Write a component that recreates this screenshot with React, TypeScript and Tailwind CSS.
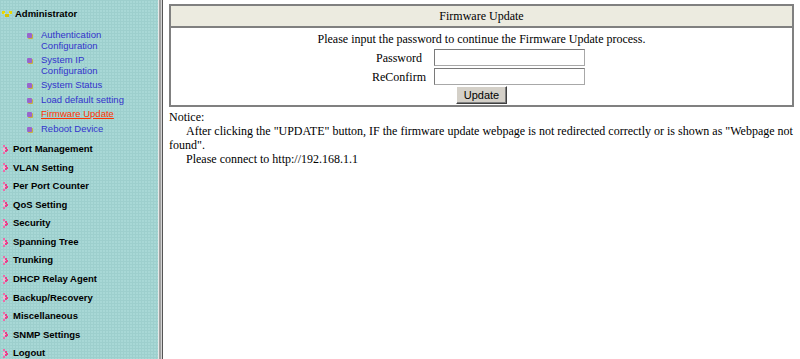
import React from 'react';

const subItems = [
  { label: 'Authentication Configuration', lines: ['Authentication', 'Configuration'] },
  { label: 'System IP Configuration', lines: ['System IP', 'Configuration'] },
  { label: 'System Status', lines: ['System Status'] },
  { label: 'Load default setting', lines: ['Load default setting'] },
  { label: 'Firmware Update', lines: ['Firmware Update'], active: true },
  { label: 'Reboot Device', lines: ['Reboot Device'] },
];

const menuItems = [
  'Port Management',
  'VLAN Setting',
  'Per Port Counter',
  'QoS Setting',
  'Security',
  'Spanning Tree',
  'Trunking',
  'DHCP Relay Agent',
  'Backup/Recovery',
  'Miscellaneous',
  'SNMP Settings',
  'Logout',
];

const PinkArrow = () => (
  <svg width="7" height="9" viewBox="0 0 7 9" className="shrink-0">
    <rect x="1" y="0" width="2" height="2" fill="#f06aa8" />
    <rect x="3" y="2" width="2" height="2" fill="#e8408a" />
    <rect x="4" y="4" width="2" height="2" fill="#e8408a" />
    <rect x="3" y="5" width="2" height="2" fill="#e8408a" />
    <rect x="1" y="7" width="2" height="2" fill="#f06aa8" />
    <rect x="1" y="3" width="2" height="3" fill="#f9b3d3" />
  </svg>
);

const YellowDown = () => (
  <svg width="10" height="7" viewBox="0 0 10 7" className="shrink-0">
    <rect x="0" y="0" width="3" height="3" fill="#e8d800" />
    <rect x="7" y="0" width="3" height="3" fill="#e8d800" />
    <rect x="3" y="3" width="4" height="3" fill="#d8c400" />
    <rect x="2" y="2" width="1" height="1" fill="#f5ec70" />
    <rect x="7" y="2" width="1" height="1" fill="#f5ec70" />
  </svg>
);

const Bullet = () => (
  <span className="mt-[3px] block h-[5px] w-[5px] shrink-0 rounded-[1px] bg-[#9966cc] shadow-[1px_1px_0_#c8b040]" />
);

const Sidebar: React.FC = () => (
  <div className="flex h-[359px] w-[158px] shrink-0 flex-col bg-[#a8d8d6] bg-[linear-gradient(#9dcfcd_1px,transparent_1px),linear-gradient(90deg,#9dcfcd_1px,transparent_1px)] bg-[size:3px_3px] font-['Liberation_Sans',Arial,sans-serif] text-[9.5px]">
    <div className="flex h-[20px] items-center gap-[3px] pl-[2px] pt-[9px] font-bold text-black">
      <YellowDown />
      <span>Administrator</span>
    </div>
    <div className="flex flex-col gap-[4px] pl-[27px] pt-[10px]">
      {subItems.map((item) => (
        <div key={item.label} className="flex items-start gap-[9px]">
          <Bullet />
          <span
            className={
              item.active
                ? 'leading-[10.5px] text-[#ff3300] underline'
                : 'leading-[10.5px] text-[#3333cc]'
            }
          >
            {item.lines.map((l) => (
              <span key={l} className="block">
                {l}
              </span>
            ))}
          </span>
        </div>
      ))}
    </div>
    <div className="flex flex-col pl-[2px] pt-[6px]">
      {menuItems.map((m) => (
        <div key={m} className="flex h-[18.55px] items-center gap-[4px] font-bold text-black">
          <PinkArrow />
          <span>{m}</span>
        </div>
      ))}
    </div>
  </div>
);

const App: React.FC = () => {
  return (
    <div className="flex h-[359px] w-[800px] overflow-hidden bg-white">
      <Sidebar />
      <div className="flex w-[5px] shrink-0">
        <div className="w-[1px] bg-[#e8e8e8]" />
        <div className="w-[2px] bg-[#a0a0a0]" />
        <div className="w-[1px] bg-[#d4d4d4]" />
        <div className="w-[1px] bg-[#555555]" />
      </div>
      <div className="flex flex-1 flex-col px-[6px] pt-[4px] font-['Liberation_Serif','Times_New_Roman',serif] text-[12px] text-black">
        <div className="flex flex-col border-2 border-[#808080]">
          <div className="flex h-[22px] items-center justify-center border-b-2 border-[#808080] bg-[#ecebe0]">
            Firmware Update
          </div>
          <div className="flex flex-col items-center pb-[1px] pt-[4px] leading-[14px]">
            <div>Please input the password to continue the Firmware Update process.</div>
            <div className="mt-[3px] grid grid-cols-[66px_151px] items-center gap-x-[2px] gap-y-[2px] pr-[12px]">
              <span className="text-center">Password</span>
              <input
                type="password"
                className="h-[17px] w-[151px] border border-[#a8a8a8] border-t-[#7a7a7a] border-l-[#7a7a7a] bg-white"
              />
              <span className="text-center">ReConfirm</span>
              <input
                type="password"
                className="h-[17px] w-[151px] border border-[#a8a8a8] border-t-[#7a7a7a] border-l-[#7a7a7a] bg-white"
              />
            </div>
            <button className="mt-[1px] h-[18px] w-[51px] border border-t-white border-l-white border-r-[#404040] border-b-[#404040] bg-[#d4d0c8] font-['Liberation_Sans',Arial,sans-serif] text-[11px] leading-none shadow-[inset_-1px_-1px_0_#808080]">
              Update
            </button>
          </div>
        </div>
        <div className="mt-[3px] leading-[14px]">
          <div>Notice:</div>
          <div className="indent-[17px]">
            After clicking the "UPDATE" button, IF the firmware update webpage is not redirected correctly or is shown as "Webpage not found".
          </div>
          <div className="indent-[17px]">Please connect to http://192.168.1.1</div>
        </div>
      </div>
    </div>
  );
};

export default App;
